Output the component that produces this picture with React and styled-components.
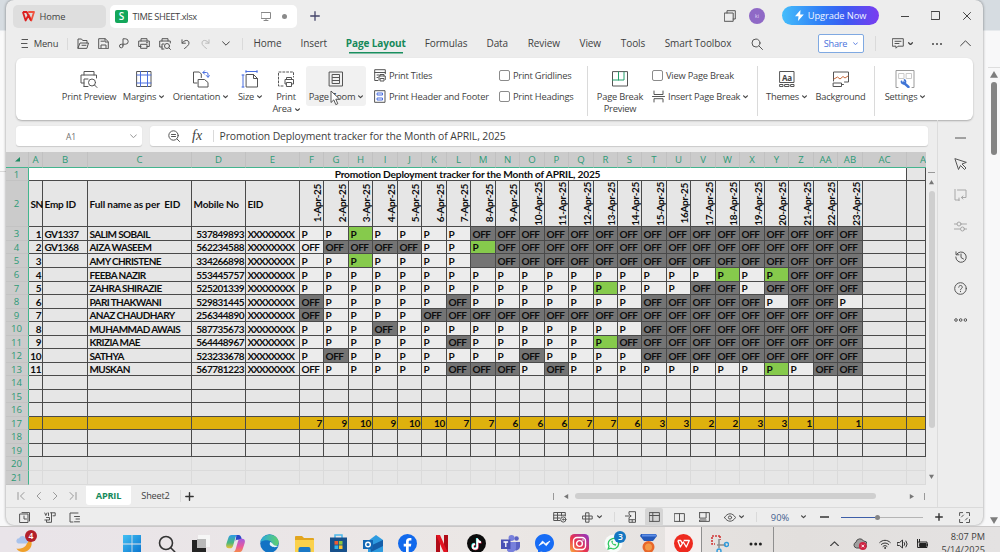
import React from 'react';
import styled, { createGlobalStyle, css } from 'styled-components';

const GlobalStyle = createGlobalStyle`
  * {
    box-sizing: border-box;
  }
  body {
    margin: 0;
    overflow: hidden;
    font-family: 'Open Sans', 'Noto Sans', sans-serif;
    color: #3f3f3f;
  }
  svg {
    display: block;
    flex: none;
  }
`;

const Screen = styled.div`
  width: 1000px;
  height: 552px;
  display: flex;
  flex-direction: column;
  overflow: hidden;
  background: #f6f6f7;
`;

const Desktop = styled.div`
  height: 526px;
  display: flex;
  flex: none;
  background: linear-gradient(#d6dce1 30px, #f8f8f9 31px);
`;

const LeftEdge = styled.div`
  width: 6px;
  padding-top: 31px;
`;

const LeftPage = styled.div`
  height: 141px;
  border-bottom: 1px solid #d9d9d9;
  border-radius: 6px 0 0 0;
  background: #fafafa;
`;

const RightEdge = styled.div`
  width: 17px;
  padding: 31px 0 0 5px;
  display: flex;
  flex-direction: column;
  align-items: center;
`;

const RightPage = styled.div`
  height: 37px;
  width: 12px;
  margin-bottom: 3px;
  border-bottom: 1px solid #dedede;
`;

const OuterThumb = styled.div`
  width: 6px;
  height: 73px;
  margin: 3px 0 361px;
  border-radius: 3px;
  background: #848484;
`;

const Window = styled.div`
  width: 977px;
  height: 525px;
  flex: none;
  display: flex;
  flex-direction: column;
  background: #ededed;
  border-radius: 8px;
  box-shadow: 0 0 3px rgba(0, 0, 0, 0.45);
`;

const TitleBar = styled.div`
  height: 31px;
  flex: none;
  display: flex;
  align-items: flex-start;
  padding: 5px 0 0 7px;
`;

const DocTab = styled.div`
  width: ${p => p.$w}px;
  height: 23px;
  margin-right: 4px;
  padding-left: ${p => (p.$active ? 5 : 9)}px;
  display: flex;
  align-items: center;
  gap: 4.5px;
  border-radius: 5px;
  font-size: 9.3px;
  letter-spacing: ${p => (p.$active ? -0.38 : -0.1)}px;
  white-space: nowrap;
  background: ${p => (p.$active ? '#fff' : '#dedede')};
`;

const SheetBadge = styled.div`
  width: 13px;
  height: 13px;
  border-radius: 2px;
  background: #13a75b;
  color: #fff;
  font-size: 10px;
  line-height: 13px;
  font-weight: 600;
  letter-spacing: 0;
  text-align: center;
`;

const UnsavedDot = styled.div`
  width: 5px;
  height: 5px;
  margin-left: 6px;
  border-radius: 50%;
  background: #8a8a8a;
`;

const Spacer = styled.div`
  flex: ${p => (p.$w ? 'none' : 1)};
  width: ${p => p.$w || 0}px;
`;

const Controls = styled.div`
  height: 21px;
  display: flex;
  align-items: center;
`;

const Avatar = styled.div`
  width: 16px;
  height: 16px;
  margin: 0 17px 0 13px;
  border-radius: 50%;
  background: #8f69c6;
  color: #e5daf5;
  font-size: 5px;
  line-height: 16px;
  text-align: center;
`;

const UpgradeButton = styled.div`
  width: 97px;
  height: 19px;
  display: flex;
  align-items: center;
  justify-content: center;
  gap: 4px;
  border-radius: 10px;
  background: linear-gradient(90deg, #45bdfb, #2f7bf6 42%, #3b5bf2 65%, #7a3cf0);
  color: #f2f6ff;
  font-size: 9.3px;
  letter-spacing: -0.1px;
`;

const MenuBar = styled.div`
  height: 27px;
  flex: none;
  display: flex;
  align-items: center;
  padding: 0 12px 2px 15px;
`;

const Cell = styled.div`
  width: ${p => p.$w}px;
  flex: none;
  display: flex;
  align-items: center;
  justify-content: center;
  white-space: nowrap;
`;

const MenuLabel = styled(Cell)`
  font-size: 9.4px;
  letter-spacing: -0.15px;
`;

const Divider = styled.div`
  width: 1px;
  height: ${p => p.$h}px;
  flex: none;
  background: #dadada;
`;

const MenuTab = styled(Cell)`
  height: 20px;
  margin-right: 20px;
  padding-bottom: 1px;
  font-size: 10px;
  letter-spacing: -0.1px;
  ${p =>
    p.$active &&
    css`
      color: #16895a;
      font-weight: 700;
      background: linear-gradient(#1a8f5f, #1a8f5f) no-repeat center bottom / 54px 1.5px;
    `}
`;

const ShareButton = styled.div`
  width: 46px;
  height: 19px;
  display: flex;
  align-items: center;
  justify-content: center;
  gap: 6px;
  border: 1px solid #7fa9e2;
  border-radius: 2px;
  background: #fff;
  color: #4a72dc;
  font-size: 9.2px;
  letter-spacing: -0.2px;
`;

const Ribbon = styled.div`
  height: 62px;
  flex: none;
  margin: 0 10px;
  padding: 8px 0 0 44px;
  display: flex;
  align-items: flex-start;
  border-radius: 6px;
  background: #fff;
  box-shadow: 0 1px 2px rgba(0, 0, 0, 0.28);
  font-size: 9.3px;
  letter-spacing: -0.22px;
`;

const RibbonButton = styled.div`
  position: relative;
  width: ${p => p.$w}px;
  height: ${p => (p.$tall ? 50 : 40)}px;
  flex: none;
  margin-left: ${p => p.$ml || 0}px;
  padding-top: 4px;
  display: flex;
  flex-direction: column;
  align-items: center;
  border-radius: 3px;
  background: ${p => (p.$hover ? '#f1f1f1' : 'none')};
`;

const RibbonLabel = styled.div`
  display: flex;
  align-items: center;
  gap: 3px;
  margin-top: ${p => (p.$first ? 3 : 0)}px;
  line-height: 12.4px;
  white-space: nowrap;
`;

const Pointer = styled.svg`
  position: absolute;
  left: 24px;
  top: 24px;
`;

const RibbonColumn = styled.div`
  width: ${p => p.$w}px;
  flex: none;
  margin: -1.5px 0 0 ${p => p.$ml || 0}px;
  display: flex;
  flex-direction: column;
`;

const RibbonRow = styled.div`
  height: 21.5px;
  display: flex;
  align-items: center;
  gap: 3px;
  white-space: nowrap;
`;

const Checkbox = styled.span`
  width: 11px;
  height: 11px;
  flex: none;
  border: 1px solid #8b8b8b;
  border-radius: 2px;
`;

const Body = styled.div`
  height: 387px;
  flex: none;
  display: flex;
`;

const Main = styled.div`
  width: 932px;
  display: flex;
  flex-direction: column;
  border-right: 1px solid #dcdcdc;
`;

const FormulaBar = styled.div`
  height: 32px;
  flex: none;
  display: flex;
  gap: 8px;
  padding: 6px 9px 6px 10px;
`;

const NameBox = styled.div`
  width: 126px;
  padding: 0 5px 0 50px;
  display: flex;
  align-items: center;
  justify-content: space-between;
  border-radius: 3px;
  background: #fff;
  box-shadow: 0 0.5px 1px rgba(0, 0, 0, 0.15);
  color: #707070;
  font-size: 8.5px;
`;

const FormulaInput = styled(NameBox)`
  flex: 1;
  padding: 0 0 0 18px;
  justify-content: flex-start;
  color: #3d3d3d;
  font-size: 10.4px;
  letter-spacing: -0.11px;
`;

const Fx = styled.div`
  width: 21px;
  margin-left: 12px;
  font: italic 14px 'Liberation Serif', serif;
  letter-spacing: 0;
`;

const FormulaText = styled.div`
  margin-left: 5.5px;
  white-space: nowrap;
`;

const SheetArea = styled.div`
  height: 333px;
  flex: none;
  display: flex;
`;

const columnTemplate =
  '23px 14px 45px 104px 54px 54px 24px 25px 24px 25px 24px 25px 24px 25px 24px 25px 24px 25px 24px 24px 25px 24px 25px 24px 25px 24px 25px 24px 25px 44px 19px';

const Grid = styled.div`
  width: 920px;
  display: flex;
  flex-direction: column;
  overflow: hidden;
  background: #e6e6e6;
  font-family: Lato, Carlito, sans-serif;
  font-weight: 700;
  font-size: 10px;
  color: #0d0d0d;
`;

const GridRow = styled.div`
  display: grid;
  flex: none;
  grid-template-columns: ${columnTemplate};
  height: ${p => p.$h}px;
  background: ${p => (p.$gold ? '#deb10d' : 'none')};
`;

const HeadCell = styled.div`
  display: flex;
  align-items: center;
  justify-content: center;
  overflow: hidden;
  background: #cbcbcb;
  border-right: 1px solid #c1c1c1;
  border-bottom: 1px solid #43b58e;
  color: #2d9a76;
  font: 9.6px 'Open Sans', sans-serif;
`;

const CutHeadCell = styled(HeadCell)`
  justify-content: flex-end;
  border-right: none;
`;

const RowHead = styled(HeadCell)`
  padding-right: 1px;
  border-right: 1px solid #43b58e;
  border-bottom: 1px solid #c3c3c3;
`;

const fills = {
  plain: 'transparent',
  light: '#ececec',
  off: '#747474',
  green: '#86ca4c',
};

const DataCell = styled.div`
  min-width: 0;
  display: flex;
  align-items: center;
  justify-content: ${p => (p.$right ? 'flex-end' : 'flex-start')};
  padding: 0 1px 0 1.5px;
  white-space: pre;
  letter-spacing: ${p => p.$ls ?? -0.45}px;
  border-right: 1px solid ${p => (p.$faint ? '#dadada' : '#4a4a4a')};
  border-bottom: 1px solid ${p => (p.$faint ? '#dadada' : '#4a4a4a')};
  background: ${p => fills[p.$fill || 'plain']};
`;

const TitleCell = styled.div`
  grid-column: 2 / 31;
  display: flex;
  align-items: center;
  justify-content: center;
  border-right: 1px solid #4a4a4a;
  border-bottom: 1px solid #4a4a4a;
  background: #fff;
  font-size: 10.2px;
  letter-spacing: -0.2px;
`;

const DateCell = styled(DataCell)`
  justify-content: flex-end;
  padding: 0;

  span {
    writing-mode: vertical-rl;
    transform: rotate(180deg);
    line-height: 12px;
  }
`;

const VScroll = styled.div`
  flex: 1;
  padding-top: 20px;
  display: flex;
  flex-direction: column;
  align-items: center;
`;

const SplitHandle = styled.div`
  width: 7px;
  height: 1px;
  margin-bottom: 7px;
  background: #999;
`;

const VThumb = styled.div`
  width: 6px;
  height: 237px;
  margin: 6px 0 46px;
  border-radius: 3px;
  background: #cfcfcf;
`;

const SheetTabs = styled.div`
  flex: 1;
  padding-left: 11px;
  display: flex;
  align-items: center;
  font-size: 9.2px;
`;

const SheetTab = styled(Cell)`
  height: 19px;
  margin: -2px 0 0 ${p => (p.$active ? 9 : 0)}px;
  border-radius: 0 0 3px 3px;
  letter-spacing: -0.2px;
  ${p =>
    p.$active &&
    css`
      background: #fff;
      color: #168a5b;
      font-weight: 700;
    `}
`;

const HThumb = styled.div`
  width: 301px;
  height: 6px;
  margin: 0 33px 0 6px;
  border-radius: 3px;
  background: #cfcfcf;
`;

const SidePanel = styled.div`
  flex: 1;
  padding-top: 2px;
  display: flex;
  flex-direction: column;
  align-items: center;
`;

const SideItem = styled.div`
  height: ${p => p.$h || 31.2}px;
  display: flex;
  align-items: center;
  opacity: ${p => (p.$dim ? 0.45 : 1)};
`;

const StatusBar = styled.div`
  flex: 1;
  display: flex;
  align-items: center;
  padding: 0 9px 0 9px;
  border-top: 1px solid #dadada;
`;

const StatusItem = styled(Cell)`
  height: 18px;
  border-radius: 2px;
  background: ${p => (p.$on ? '#d5d5d5' : 'none')};
  color: #44618d;
  font-size: 9.3px;
`;

const Slider = styled.div`
  width: 82px;
  height: 5px;
  display: flex;
  align-items: center;

  &::before {
    content: '';
    width: 34px;
    height: 1px;
    background: #3d5ea8;
  }
  &::after {
    content: '';
    flex: 1;
    height: 1px;
    background: #b5b5b5;
  }
`;

const Knob = styled.div`
  width: 5px;
  height: 5px;
  border-radius: 50%;
  background: #858585;
`;

const Taskbar = styled.div`
  height: 34px;
  flex: none;
  display: flex;
  align-items: center;
  border-top: 1px solid #c9c7c7;
  background: linear-gradient(90deg, #e9e4e9, #ebe7e5 50%, #e2dfdd 80%, #e4e2e2);
`;

const TaskSlot = styled.div`
  position: relative;
  width: ${p => p.$w || 34.4}px;
  height: 34px;
  flex: none;
  display: flex;
  align-items: center;
  justify-content: center;
  background: ${p => (p.$on ? '#f4efee' : 'none')};
  border-right: ${p => (p.$line ? '1px solid #8f8f8f' : 'none')};
`;

const Badge = styled.div`
  position: absolute;
  left: ${p => p.$x}px;
  top: ${p => p.$y}px;
  width: 12px;
  height: 12px;
  border-radius: 50%;
  background: ${p => p.$color};
  color: #fff;
  font-size: 8.5px;
  font-weight: 600;
  line-height: 12px;
  text-align: center;
`;

const Clock = styled.div`
  width: 60px;
  margin-left: auto;
  margin-right: 15px;
  font-size: 9.2px;
  line-height: 12.5px;
  text-align: right;
  white-space: nowrap;
`;

const Line = ({ w = 12, h = w, color = '#555', sw = 1, children }) => (
  <svg
    width={w}
    height={h}
    viewBox={`0 0 ${w} ${h}`}
    fill="none"
    stroke={color}
    strokeWidth={sw}
    strokeLinejoin="round"
    strokeLinecap="round"
  >
    {children}
  </svg>
);

const Chevron = ({ w = 5, sw = 1.1, color = '#444', up }) => {
  const r = w / 2 - 0.6;
  return (
    <Line w={w} h={w / 2 + 1} sw={sw} color={color}>
      <path d={up ? `M.6 ${r + 0.8}l${r}-${r} ${r} ${r}` : `M.6.8l${r} ${r} ${r}-${r}`} />
    </Line>
  );
};

const trianglePaths = {
  up: 'M0 5 3 0l3 5z',
  down: 'M0 1h6L3 6z',
  left: 'M5 0v6L0 3z',
  right: 'M1 0v6l5-3z',
};

const Triangle = ({ w = 6, dir = 'up', color = '#777' }) => (
  <svg width={w} height={w} viewBox="0 0 6 6">
    <path d={trianglePaths[dir]} fill={color} />
  </svg>
);

const Dots = ({ r = 1, color = '#444', gap = 4, hollow }) => (
  <svg width={gap * 2 + 4} height="4">
    {[0, 1, 2].map(i => (
      <circle
        key={i}
        cx={2 + i * gap}
        cy="2"
        r={r}
        fill={hollow ? 'none' : color}
        stroke={hollow ? color : 'none'}
        strokeWidth=".9"
      />
    ))}
  </svg>
);

const WpsLogo = () => (
  <svg width="13" height="11" viewBox="0 0 13 11" fill="none" strokeWidth="1.8" strokeLinejoin="round">
    <path d="M6.200 1h5.800L9.300 9.500 6.500 3.500" stroke="#f0533f" />
    <path d="M.9 1l2.700 8.500L6.300 4.500 9 9.500M.9 1h3.800l2 4" stroke="#dc1f1f" />
  </svg>
);

const names = [
  ['1', 'GV1337', 'SALIM SOBAIL', '537849893'],
  ['2', 'GV1368', 'AIZA WASEEM', '562234588'],
  ['3', '', 'AMY CHRISTENE', '334266898'],
  ['4', '', 'FEEBA NAZIR', '553445757'],
  ['5', '', 'ZAHRA SHIRAZIE', '525201339'],
  ['6', '', 'PARI THAKWANI', '529831445'],
  ['7', '', 'ANAZ CHAUDHARY', '256344890'],
  ['8', '', 'MUHAMMAD AWAIS', '587735673'],
  ['9', '', 'KRIZIA MAE', '564448967'],
  ['10', '', 'SATHYA', '523233678'],
  ['11', '', 'MUSKAN', '567781223'],
];

// P present, O off, G highlighted present, F off without fill, X filled blank
const attendance = [
  'PPGPPPPOOOOOOOOOOOOOOOO',
  'FOOOOPPGOOOOOOOOOOOOOOO',
  'PPGPPPPXOOOOOOOOOOOOOOO',
  'PPPPPPPPPPPPPPPPPGPGOOO',
  'PPPPPPPPPPPPGPPPOOPOOOO',
  'OPPPPPOPPPPPPPOOOOOPOOP',
  'OPPPPOOOOOOOOOOOOOOOOOO',
  'PPPOPPPPPPPPPPOOOOOOOOO',
  'PPPPPPOPPPPPGOOOOOOOOOO',
  'POPPPPPPPOPPPPOOOOOOOOO',
  'FPPPPPOOOPOPPPPPPPPGPOO',
];

const marks = {
  P: ['P', 'light'],
  O: ['OFF', 'off'],
  G: ['P', 'green'],
  F: ['OFF', 'light'],
  X: ['', 'off'],
};

const totals = [7, 9, 10, 9, 10, 10, 7, 7, 6, 6, 6, 7, 7, 6, 3, 3, 2, 2, 3, 3, 1, '', 1];
const letters = 'A B C D E F G H I J K L M N O P Q R S T U V W X Y Z AA AB AC'.split(' ');
const dates = totals.map((_, i) => (i === 15 ? '16Apr-25' : `${i + 1}-Apr-25`));
const rowHeights = [14, 13, 14, 14, 13, 14, 13, 14, 13, 14, 13];
const emptyCells = Array.from({ length: 30 });

function BlankRow({ n, h, faint }) {
  return (
    <GridRow $h={h}>
      <RowHead>{n}</RowHead>
      {emptyCells.map((_, i) => (
        <DataCell key={i} $faint={faint} />
      ))}
    </GridRow>
  );
}

function Sheet() {
  return (
    <Grid>
      <GridRow $h={16}>
        <HeadCell>
          <svg width="5" height="5">
            <path d="M5 0v4.5H0z" fill="#1e8a62" />
          </svg>
        </HeadCell>
        {letters.map(l => (
          <HeadCell key={l}>{l}</HeadCell>
        ))}
        <CutHeadCell>A</CutHeadCell>
      </GridRow>
      <GridRow $h={13}>
        <RowHead>1</RowHead>
        <TitleCell>Promotion Deployment tracker for the Month of APRIL, 2025</TitleCell>
        <DataCell />
      </GridRow>
      <GridRow $h={46}>
        <RowHead>2</RowHead>
        <DataCell>SN</DataCell>
        <DataCell $ls={-0.2}>Emp ID</DataCell>
        <DataCell $ls={-0.1}>Full name as per  EID</DataCell>
        <DataCell $ls={-0.15}>Mobile No</DataCell>
        <DataCell $ls={-0.2}>EID</DataCell>
        {dates.map(d => (
          <DateCell key={d} $ls={-0.35}>
            <span>{d}</span>
          </DateCell>
        ))}
        <DataCell />
        <DataCell />
      </GridRow>
      {names.map(([sn, emp, name, phone], r) => (
        <GridRow key={sn} $h={rowHeights[r]}>
          <RowHead>{r + 3}</RowHead>
          <DataCell $right>{sn}</DataCell>
          <DataCell $ls={-0.55}>{emp}</DataCell>
          <DataCell $ls={-0.6}>{name}</DataCell>
          <DataCell $ls={-0.5} $right>
            {phone}
          </DataCell>
          <DataCell $ls={-0.9}>XXXXXXXX</DataCell>
          {attendance[r].split('').map((m, i) => (
            <DataCell key={i} $fill={marks[m][1]}>
              {marks[m][0]}
            </DataCell>
          ))}
          <DataCell />
          <DataCell />
        </GridRow>
      ))}
      <BlankRow n={14} h={14} />
      <BlankRow n={15} h={13} />
      <BlankRow n={16} h={14} />
      <GridRow $h={13} $gold>
        <RowHead>17</RowHead>
        {emptyCells.slice(0, 5).map((_, i) => (
          <DataCell key={i} />
        ))}
        {totals.map((t, i) => (
          <DataCell key={i} $ls={-0.3} $right>
            {t}
          </DataCell>
        ))}
        <DataCell />
        <DataCell />
      </GridRow>
      <BlankRow n={18} h={14} />
      <BlankRow n={19} h={13} />
      <BlankRow n={20} h={14} faint />
      <BlankRow n={21} h={14} faint />
    </Grid>
  );
}

function TopBar() {
  return (
    <TitleBar>
      <DocTab $w={93}>
        <WpsLogo />
        Home
      </DocTab>
      <DocTab $w={187} $active>
        <SheetBadge>S</SheetBadge>
        TIME SHEET.xlsx
        <Spacer />
        <Line w={10} h={9} color="#888">
          <path d="M.5.5h9v6h-9zM5 6.500v2M3 8.500h4" />
        </Line>
        <UnsavedDot />
        <Spacer $w={6} />
      </DocTab>
      <Controls>
        <Spacer $w={9} />
        <Line w={10} color="#44446a" sw={1.3}>
          <path d="M5 .7v8.600M.7 5h8.600" />
        </Line>
      </Controls>
      <Spacer />
      <Controls>
        <Line w={12}>
          <path d="M.7 3h8.500v8.300H.7zM3 3V.7h8.300V9H9.200" />
        </Line>
        <Avatar>ki</Avatar>
        <UpgradeButton>
          <svg width="9" height="11" viewBox="0 0 9 11">
            <path d="M5.500 0 0 6.300h3.500L3 11l5.800-6.500H5.200z" fill="#fff" />
          </svg>
          Upgrade Now
        </UpgradeButton>
        <Spacer $w={22} />
        <Line w={8} color="#444">
          <path d="M0 4.500h8" />
        </Line>
        <Spacer $w={22} />
        <Line w={9} color="#444">
          <path d="M.5.5h8v8h-8z" />
        </Line>
        <Spacer $w={23} />
        <Line w={8} color="#444">
          <path d="M.5.5l7 7M7.500.5l-7 7" />
        </Line>
        <Spacer $w={12} />
      </Controls>
    </TitleBar>
  );
}

function Menu() {
  return (
    <MenuBar>
      <Line w={7} h={9}>
        <path d="M1 .5h6M0 4.500h6M1 8.500h6" />
      </Line>
      <Spacer $w={6} />
      <MenuLabel $w={24}>Menu</MenuLabel>
      <Spacer $w={9} />
      <Divider $h={12} />
      <Spacer $w={8} />
      <Cell $w={14}>
        <Line w={12} h={11}>
          <path d="M1 10V1h3.500l1.200 1.500H10V5M1 10l2-5h8.500L10 10zM5 7.300h4" />
        </Line>
      </Cell>
      <Spacer $w={6.5} />
      <Cell $w={14}>
        <Line w={11}>
          <path d="M.7 10.300V.7h6.500l3.100 3v6.600zM3 10V7h5v3M3 3.200h3M7 1v3h3" />
        </Line>
      </Cell>
      <Spacer $w={6.5} />
      <Cell $w={14}>
        <Line w={10} h={11}>
          <path d="M4 7.500V.8h2.500a2.700 2.700 0 0 1 0 5.400H3.200M4 7.500a1.800 1.800 0 1 1-1.600-1.300" />
        </Line>
      </Cell>
      <Spacer $w={6} />
      <Cell $w={14}>
        <Line w={12} h={11}>
          <path d="M3 3V.7h6V3M3 8.500H.7V3h10.600v5.500H9M3 6.300h6v4H3zM8.500 4.700h1" />
        </Line>
      </Cell>
      <Spacer $w={7} />
      <Cell $w={14}>
        <Line w={12} h={12}>
          <path d="M3 3V.7h6V3M3 9H.7V3h10.600v2M3 11V6h2M3 11h2" />
          <circle cx="8" cy="8" r="2.500" />
          <path d="M9.800 9.800l1.700 1.700" />
        </Line>
      </Cell>
      <Spacer $w={6} />
      <Cell $w={14}>
        <Line w={9} h={10}>
          <path d="M1 .8v3.400h3.400M1.200 4C3 .8 8 .3 8 4c0 2.200-2 3.500-4.500 5.500" />
        </Line>
      </Cell>
      <Spacer $w={6} />
      <Cell $w={14}>
        <Line w={9} h={10} color="#bbb">
          <path d="M8 .8v3.400H4.600M7.800 4C6 .8 1 .3 1 4c0 2.200 2 3.500 4.500 5.500" />
        </Line>
      </Cell>
      <Spacer $w={7} />
      <Cell $w={14}>
        <Chevron w={8} sw={1} />
      </Cell>
      <Spacer $w={9} />
      <Divider $h={12} />
      <Spacer $w={10.5} />
      <MenuTab $w={28}>Home</MenuTab>
      <MenuTab $w={24.5}>Insert</MenuTab>
      <MenuTab $w={59.5} $active>
        Page Layout
      </MenuTab>
      <MenuTab $w={41}>Formulas</MenuTab>
      <MenuTab $w={21.5}>Data</MenuTab>
      <MenuTab $w={31.5}>Review</MenuTab>
      <MenuTab $w={21.5}>View</MenuTab>
      <MenuTab $w={24}>Tools</MenuTab>
      <MenuTab $w={66}>Smart Toolbox</MenuTab>
      <Line w={12}>
        <circle cx="5" cy="5" r="4" />
        <path d="M8 8l3.500 3.500" />
      </Line>
      <Spacer />
      <ShareButton>
        Share
        <Chevron color="#4a72dc" w={5} sw={0.9} />
      </ShareButton>
      <Spacer $w={11} />
      <Divider $h={15} />
      <Spacer $w={16} />
      <Line w={12} h={11}>
        <path d="M.7.7h10.600v7.500H6L4 10.200v-2H.7zM3 3.300h6M3 5.500h4" />
      </Line>
      <Spacer $w={4} />
      <Chevron w={5} sw={1.3} />
      <Spacer $w={18} />
      <Dots />
      <Spacer $w={17} />
      <Chevron w={11} sw={1} up />
    </MenuBar>
  );
}

function Tool({ w, ml, label, second, arrow, hover, icon, children }) {
  return (
    <RibbonButton $w={w} $ml={ml} $tall={!!second} $hover={hover}>
      {icon}
      <RibbonLabel $first>
        {label}
        {arrow && !second && <Chevron w={5} sw={1.2} />}
      </RibbonLabel>
      {second && (
        <RibbonLabel>
          {second}
          {arrow && <Chevron w={5} sw={1.2} />}
        </RibbonLabel>
      )}
      {children}
    </RibbonButton>
  );
}

function RibbonBar() {
  return (
    <Ribbon>
      <Tool
        w={58}
        label="Print Preview"
        icon={
          <Line w={18}>
            <path d="M4 5V1.500h10V5M4 13H1V5h15.500v3M4 16.500V9h4M4 16.500h4" />
            <circle cx="12" cy="12.500" r="3.500" />
            <path d="M14.500 15l2.500 2.500" />
          </Line>
        }
      />
      <Tool
        w={51}
        label="Margins"
        arrow
        icon={
          <Line w={18}>
            <path d="M2 1.500h14v15H2z" />
            <path d="M5.500 1.500v15M12.500 1.500v15M2 5h14M2 13h14" stroke="#4a6fe0" />
          </Line>
        }
      />
      <Tool
        w={63}
        label="Orientation"
        arrow
        icon={
          <Line w={18}>
            <path d="M5 13H1.500V2h5.800l2 2v3.500" />
            <path d="M6.500 9.500h6l3.500 3v4.500H6.500z" />
            <path d="M11 2.500h3.500a1.500 1.500 0 0 1 1.500 1.500v3M12.500.8 11 2.500l1.500 1.700M14.300 5.500 16 7.300l1.500-1.700" stroke="#4a6fe0" />
          </Line>
        }
      />
      <Tool
        w={36}
        label="Size"
        arrow
        icon={
          <Line w={18}>
            <path d="M5.500 4.500h7l4 4v8.500h-11zM12.500 4.500v4h4" />
            <path d="M1 5h2M2 5v12M1 17h2M5 1.500h11M5 .5v2M16 .5v2" stroke="#4a6fe0" />
          </Line>
        }
      />
      <Tool
        w={36}
        label="Print"
        second="Area"
        arrow
        icon={
          <Line w={18}>
            <path d="M6 16H1.500V2h15v5" strokeDasharray="2 1.800" />
            <path d="M9.500 9.500v-2h5v2M9 14H8V9.500h8.500V14H15M9.800 12.500h4.700v4H9.800z" />
          </Line>
        }
      />
      <Tool
        w={60}
        ml={2}
        label="Page Zoom"
        arrow
        hover
        icon={
          <Line w={18}>
            <path d="M2.500 2h13v14h-13zM5.500 4.500h7v9h-7zM5.500 7.500h7M5.500 10.500h7" />
          </Line>
        }
      >
        <Pointer width="12" height="16" viewBox="0 0 12 16">
          <path d="M1 1v11.500l2.800-2.600 2 4.700 2-.9-2-4.500h3.900z" fill="#fff" stroke="#444" strokeWidth=".9" />
        </Pointer>
      </Tool>
      <RibbonColumn $w={125} $ml={8}>
        <RibbonRow>
          <Line w={12} h={13}>
            <path d="M4 11.500H.7V.7h10.600v4M.7 3.500h10.600M3 6h2M3 8.500h1M6 7V5.500h4V7M5 10.500V7h6.300v3.500M6.500 9.500h3.500V12H6.500z" />
          </Line>
          Print Titles
        </RibbonRow>
        <RibbonRow>
          <Line w={12} h={13}>
            <path d="M1 .7h10v11.600H1z" />
            <path d="M3.500 3h5v2h-5zM3.500 8h5v2h-5z" stroke="#4a6fe0" />
          </Line>
          Print Header and Footer
        </RibbonRow>
      </RibbonColumn>
      <RibbonColumn $w={88}>
        <RibbonRow>
          <Checkbox />
          Print Gridlines
        </RibbonRow>
        <RibbonRow>
          <Checkbox />
          Print Headings
        </RibbonRow>
      </RibbonColumn>
      <Divider $h={50} />
      <Tool
        w={64}
        label="Page Break"
        second="Preview"
        icon={
          <Line w={18}>
            <path d="M1.500 2v14h15V2z" />
            <path d="M1.500 10h11.500V2M7.500 2v8" stroke="#25a06c" />
          </Line>
        }
      />
      <RibbonColumn $w={105}>
        <RibbonRow>
          <Checkbox />
          View Page Break
        </RibbonRow>
        <RibbonRow>
          <Line w={13} h={13}>
            <path d="M2 1v3.500h9V1M.5 6.500h12M2 12V8.700h9V12" />
          </Line>
          Insert Page Break
          <Chevron w={5} sw={1.2} />
        </RibbonRow>
      </RibbonColumn>
      <Divider $h={50} />
      <Tool
        w={57}
        label="Themes"
        arrow
        icon={
          <Line w={18}>
            <path d="M2 1.500h14v11H2zM2 14.500h3v2H2zM7 14.500h4v2H7zM13 14.500h3v2h-3z" />
            <text x="9" y="10.500" fontSize="8" fontWeight="700" textAnchor="middle" fill="#444" stroke="none">
              Aa
            </text>
          </Line>
        }
      />
      <Tool
        w={51}
        label="Background"
        icon={
          <Line w={18}>
            <path d="M1.500 11V2h15v10h-4M1.500 13h8v3.500h-8zM9.500 14.500h2" />
            <path d="M2 9l3.500-2 2.500 2 3-2.500 2 1.500 3-2" stroke="#c96a3c" />
          </Line>
        }
      />
      <Spacer $w={8} />
      <Divider $h={50} />
      <Tool
        w={60}
        label="Settings"
        arrow
        icon={
          <Line w={20} h={18} color="#9a9a9a">
            <path d="M3 17.500H1V.5h18v17h-2" />
            <path d="M4 3.500h5v5H4zM11.500 3.500h5v5h-5z" stroke="#c9c9c9" />
            <path d="M8.500 12.500l5 4.500" stroke="#3f74d6" strokeWidth="2.400" />
            <path d="M6.500 11.500a2 2 0 0 0 3.500 1.500 2 2 0 0 0-.5-3" stroke="#3f74d6" strokeWidth="1.800" />
          </Line>
        }
      />
    </Ribbon>
  );
}

function SheetFooter() {
  return (
    <SheetTabs>
      <Cell $w={8}>
        <Line w={8} h={8} color="#999">
          <path d="M1 .5v7M7 .5 3.500 4 7 7.500" />
        </Line>
      </Cell>
      <Spacer $w={9} />
      <Cell $w={8}>
        <Line w={5} h={8} color="#999">
          <path d="M4.500.5 1 4l3.500 3.500" />
        </Line>
      </Cell>
      <Spacer $w={9} />
      <Cell $w={8}>
        <Line w={5} h={8} color="#999">
          <path d="M.5.5 4 4 .5 7.500" />
        </Line>
      </Cell>
      <Spacer $w={9} />
      <Cell $w={9}>
        <Line w={8} h={8} color="#999">
          <path d="M7 .5v7M1 .5 4.500 4 1 7.500" />
        </Line>
      </Cell>
      <SheetTab $w={45} $active>
        APRIL
      </SheetTab>
      <SheetTab $w={49}>Sheet2</SheetTab>
      <Divider $h={12} />
      <Spacer $w={4} />
      <Line w={9} color="#333" sw={1.4}>
        <path d="M4.500.8v7.400M.8 4.500h7.400" />
      </Line>
      <Spacer />
      <Line w={1} h={7} color="#999">
        <path d="M.5 0v7" />
      </Line>
      <Spacer $w={10} />
      <Triangle w={5} dir="left" />
      <HThumb />
      <Triangle w={5} dir="right" />
      <Spacer $w={10} />
      <Line w={1} h={7} color="#999">
        <path d="M.5 0v7" />
      </Line>
      <Spacer $w={12} />
    </SheetTabs>
  );
}

function Tools() {
  return (
    <SidePanel>
      <SideItem>
        <Line w={11} h={2}>
          <path d="M0 1h11" />
        </Line>
      </SideItem>
      <SideItem $h={22}>
        <Line w={13} h={13}>
          <path d="M1 1l3.500 10.500 2-4 4 4 1.500-1.500-4-4 4-1.500z" />
        </Line>
      </SideItem>
      <SideItem $dim $h={40}>
        <Line w={13} h={12}>
          <path d="M1 0v11h4M3.500 1h8.500v7.500H7.500M9 7l-1.700 1.500L9 10M5 9v3" />
        </Line>
      </SideItem>
      <SideItem $dim $h={22}>
        <Line w={13} h={11}>
          <path d="M0 3h3M7 3h5.500M0 8h6M10 8h3" />
          <circle cx="5" cy="3" r="2" />
          <circle cx="8.500" cy="8" r="2" />
        </Line>
      </SideItem>
      <SideItem $h={40}>
        <Line w={12}>
          <path d="M1.500 3.500A5.200 5.200 0 1 1 .8 6M1 .8v3h3M6 3v3.500l2.500 1.500" />
        </Line>
      </SideItem>
      <SideItem $h={23}>
        <Line w={13}>
          <circle cx="6.500" cy="6.500" r="5.800" />
          <path d="M4.700 5.200c0-2.400 3.600-2.300 3.600 0 0 1.300-1.800 1.300-1.800 2.600M6.500 9.400v.3" />
        </Line>
      </SideItem>
      <SideItem $h={40}>
        <Dots gap={4.700} r={1.300} hollow />
      </SideItem>
    </SidePanel>
  );
}

function Status() {
  return (
    <StatusBar>
      <StatusItem $w={19}>
        <Line w={11}>
          <path d="M1 2h8v8.500H1zM3 .6h7.500V9M5 4v3h2.500" />
        </Line>
      </StatusItem>
      <Spacer $w={6} />
      <StatusItem $w={19}>
        <Line w={12} h={11}>
          <path d="M.8 1l1 2.500L3 1M4.500 1v2.500M6.500.8h4.700v3H9M2.500 5.500h3V8h-3v2.300h5V1M.8 8h1.700" />
        </Line>
      </StatusItem>
      <Spacer $w={6} />
      <StatusItem $w={19}>
        <Line w={11}>
          <path d="M9 1H1v9h3M5.500 4.500h5M7 7h3.500M5.500 9.800h5" />
        </Line>
      </StatusItem>
      <Spacer />
      <StatusItem $w={20}>
        <Line w={14} h={12}>
          <path d="M7 9.500H.7v-8h11.600V5M.7 4.200h11.600M.7 7H7M4.500 1.500v8M8.500 1.500V5" />
          <circle cx="10.300" cy="8.500" r="2.600" />
          <circle cx="10.300" cy="8.500" r=".7" />
        </Line>
      </StatusItem>
      <Spacer $w={8} />
      <StatusItem $w={19}>
        <Line w={11}>
          <path d="M4 .8h3v9.400H4zM.8 4h9.400v3H.8z" />
        </Line>
      </StatusItem>
      <Chevron w={5} sw={1.2} />
      <Spacer $w={12} />
      <Divider $h={10} />
      <Spacer $w={7} />
      <StatusItem $w={19}>
        <Line w={12}>
          <path d="M4 3V.7h6.500v8H4V7M0 5h6M4.500 3.500 6 5 4.500 6.500M4 9v2.300h6.500V9M7.200 9v2" />
        </Line>
      </StatusItem>
      <Spacer $w={4.5} />
      <StatusItem $w={18} $on>
        <Line w={11} h={10}>
          <path d="M.6.6h9.800v8.800H.6zM.6 3.500h9.800M3.800.6v8.800" />
        </Line>
      </StatusItem>
      <Spacer $w={7} />
      <StatusItem $w={18}>
        <Line w={11} h={9}>
          <path d="M.6.6h9.800v7.800H.6zM5.500.6v7.800" />
        </Line>
      </StatusItem>
      <Spacer $w={7} />
      <StatusItem $w={18}>
        <Line w={11} h={10}>
          <path d="M.6.6h9.800v8.800H.6M.6.6v5.500h6.500V.6M.6 9.400V8h6.500" />
        </Line>
      </StatusItem>
      <Spacer $w={8} />
      <StatusItem $w={18}>
        <Line w={12} h={9}>
          <path d="M.5 4.500c3-5 8-5 11 0-3 5-8 5-11 0z" />
          <circle cx="6" cy="4.500" r="1.600" />
        </Line>
      </StatusItem>
      <Chevron w={5} sw={1.2} />
      <Spacer $w={12} />
      <Divider $h={10} />
      <Spacer $w={13} />
      <StatusItem $w={20}>90%</StatusItem>
      <Spacer $w={11} />
      <Chevron w={5} sw={1.2} />
      <Spacer $w={14} />
      <Line w={9} h={2} color="#333" sw={1.3}>
        <path d="M0 1h9" />
      </Line>
      <Spacer $w={12} />
      <Slider>
        <Knob />
      </Slider>
      <Spacer $w={12} />
      <Line w={8} color="#333" sw={1.4}>
        <path d="M4 .7v6.600M.7 4h6.600" />
      </Line>
      <Spacer $w={16} />
      <Line w={11}>
        <path d="M.6 3.500V.6h3M7.500.6h3v3M10.500 7.500v3h-3M3.600 10.500h-3v-3M2.500 5l2-2M8.500 6l-2 2" />
      </Line>
      <Spacer $w={4} />
    </StatusBar>
  );
}

function WindowsTaskbar() {
  return (
    <Taskbar>
      <TaskSlot $w={50}>
        <svg width="20" height="20" viewBox="0 0 20 20">
          <path d="M16 6c2.500 6-2 12-8 12-3 0-5.500-1.500-6.500-3.500C8 15.500 13 12 12 6z" fill="#f0a02a" />
          <path d="M3 9.500A2.700 2.700 0 0 1 4 4.300 4 4 0 0 1 11.500 5 2.300 2.300 0 0 1 11 9.500z" fill="#a9c3ec" />
        </svg>
        <Badge $x={25} $y={3.500} $color="#b3202a">
          4
        </Badge>
      </TaskSlot>
      <Spacer $w={65} />
      <TaskSlot>
        <svg width="18" height="18" viewBox="0 0 18 18">
          <defs>
            <linearGradient id="win" x1="0" y1="0" x2="1" y2="1">
              <stop offset="0" stopColor="#43c0f3" />
              <stop offset="1" stopColor="#0a74cf" />
            </linearGradient>
          </defs>
          <path d="M0 0h8.600v8.600H0zM9.400 0H18v8.600H9.400zM0 9.400h8.600V18H0zM9.400 9.400H18V18H9.400z" fill="url(#win)" />
        </svg>
      </TaskSlot>
      <TaskSlot>
        <Line w={18} color="#333" sw={1.6}>
          <circle cx="8" cy="8" r="6.500" />
          <path d="M12.700 12.700l4 4" />
        </Line>
      </TaskSlot>
      <TaskSlot>
        <svg width="18" height="18">
          <path d="M6 0h12v12H6z" fill="#f6f6f6" />
          <path d="M0 5h14v13H0z" fill="#242424" />
          <path d="M5 4h9v9H5z" fill="#b9b9b9" />
        </svg>
      </TaskSlot>
      <TaskSlot>
        <svg width="19" height="19" viewBox="0 0 20 20">
          <defs>
            <linearGradient id="copilotA" x1="0" y1="0" x2="0" y2="1">
              <stop offset="0" stopColor="#2b9be8" />
              <stop offset=".6" stopColor="#4cb87a" />
              <stop offset="1" stopColor="#f0c030" />
            </linearGradient>
            <linearGradient id="copilotB" x1="0" y1="0" x2="0" y2="1">
              <stop offset="0" stopColor="#a35be0" />
              <stop offset=".6" stopColor="#ea5a9a" />
              <stop offset="1" stopColor="#f58a4a" />
            </linearGradient>
          </defs>
          <path d="M6 1h6.500c-2 .5-2.300 2-2.800 3.500L7.500 12c-.5 1.800-1.300 3-3 3H3c-3 0-3.300-2.500-2.500-5L2.500 4C3 2.200 4 1 6 1z" fill="url(#copilotA)" />
          <path d="M11 1h2.500c1.500 0 2 1 2.500 2.500L16.700 6h-4.500c-1.200 0-1.800.5-2.200 1.500z" fill="#2848c8" />
          <path d="M14 19H7.500c2-.5 2.300-2 2.800-3.500L12.500 8c.5-1.800 1.300-3 3-3H17c3 0 3.300 2.500 2.500 5l-2 6c-.5 1.800-1.500 3-3.500 3z" fill="url(#copilotB)" />
        </svg>
      </TaskSlot>
      <TaskSlot>
        <svg width="19" height="19" viewBox="0 0 19 19">
          <defs>
            <linearGradient id="edge" x1="0" y1="0" x2="1" y2="0">
              <stop offset="0" stopColor="#2aa9dd" />
              <stop offset="1" stopColor="#5fd06e" />
            </linearGradient>
          </defs>
          <circle cx="9.500" cy="9.500" r="9.300" fill="#1273c4" />
          <path d="M.4 8C2-1 16-2 18.500 7c1 5-4 6.500-7 5 3-5-5-8-11.100-4z" fill="url(#edge)" />
          <path d="M11 12c-2-1-1-3-1-4 3 0 2 4 8 4-1 1-4 2-7 0z" fill="#e9f5f8" />
        </svg>
      </TaskSlot>
      <TaskSlot>
        <svg width="19" height="18" viewBox="0 0 19 18">
          <path d="M0 2a1 1 0 0 1 1-1h6l2 2h9a1 1 0 0 1 1 1v14H0z" fill="#e2a51e" />
          <path d="M0 5h19v13H0z" fill="#fbd14b" />
          <path d="M3.500 18v-4a2 2 0 0 1 2-2h8a2 2 0 0 1 2 2v4z" fill="#1b79c6" />
        </svg>
      </TaskSlot>
      <TaskSlot>
        <svg width="19" height="19" viewBox="0 0 19 19">
          <path d="M6 4V1h7v3" fill="none" stroke="#4bb8ec" strokeWidth="1.500" />
          <path d="M1 3.500h17V17a2 2 0 0 1-2 2H3a2 2 0 0 1-2-2z" fill="#17508b" />
          <path d="M5.500 7h3.600v3.600H5.500z" fill="#ef5a33" />
          <path d="M9.900 7h3.600v3.600H9.900z" fill="#8cc63f" />
          <path d="M5.500 11.400h3.600V15H5.500z" fill="#33b3ea" />
          <path d="M9.900 11.400h3.600V15H9.900z" fill="#fcc42d" />
        </svg>
      </TaskSlot>
      <TaskSlot>
        <svg width="20" height="18" viewBox="0 0 20 18">
          <path d="M5 6l8-6 7 5v11a2 2 0 0 1-2 2H5z" fill="#2d9be0" />
          <path d="M7 11l13-6v6L8 17z" fill="#145ea9" />
          <path d="M0 5h10v9H0z" fill="#1267b4" />
          <circle cx="5" cy="9.500" r="2.300" fill="none" stroke="#fff" strokeWidth="1.400" />
        </svg>
      </TaskSlot>
      <TaskSlot>
        <svg width="19" height="19" viewBox="0 0 19 19">
          <circle cx="9.500" cy="9.500" r="9.500" fill="#1169ec" />
          <path d="M8 19v-6.500H5.700V9.800H8V7.700C8 5.300 9.400 4 11.600 4l1.800.1v2.300h-1.200c-1.200 0-1.500.6-1.500 1.400v2h2.600l-.4 2.700h-2.200V19z" fill="#fff" />
        </svg>
      </TaskSlot>
      <TaskSlot>
        <svg width="12" height="18" viewBox="0 0 12 18">
          <path d="M0 0h4v18H0zM8 0h4v18H8z" fill="#b00b17" />
          <path d="M0 0h4l8 18H8z" fill="#e31422" />
        </svg>
      </TaskSlot>
      <TaskSlot>
        <svg width="19" height="19" viewBox="0 0 19 19" fill="none" strokeWidth="1.800">
          <circle cx="9.500" cy="9.500" r="9.500" fill="#0c0c0c" />
          <path d="M9.800 4v8a2.300 2.300 0 1 1-2.300-2.300M9.800 4.500c.4 2 2 3.200 3.700 3.200" stroke="#25e5e0" />
          <path d="M10.800 5v8a2.300 2.300 0 1 1-2.300-2.300M10.800 5.500c.4 2 2 3.200 3.700 3.200" stroke="#f0365f" />
          <path d="M10.300 4.500v8A2.300 2.300 0 1 1 8 10.200M10.300 5c.4 2 2 3.200 3.700 3.200" stroke="#fff" />
        </svg>
      </TaskSlot>
      <TaskSlot>
        <svg width="19" height="18" viewBox="0 0 19 18">
          <circle cx="15.500" cy="3.500" r="2.300" fill="#5b62c4" />
          <circle cx="10.500" cy="3" r="3" fill="#7880dc" />
          <path d="M12 7h7v5a4 4 0 0 1-7 2z" fill="#5b62c4" />
          <path d="M6 7h9v5.500a5 5 0 0 1-9 3z" fill="#7880dc" />
          <path d="M0 4.500h9.500V14H0z" fill="#4850b5" />
          <path d="M2.500 7h4.600M4.800 7v5" stroke="#fff" strokeWidth="1.300" />
        </svg>
      </TaskSlot>
      <TaskSlot>
        <svg width="19" height="19" viewBox="0 0 19 19">
          <path d="M9.500 0C4 0 0 4 0 9.200c0 2.800 1.200 5.200 3 6.800V19l3-1.400c1 .3 2.200.5 3.500.5 5.500 0 9.500-4 9.500-9S15 0 9.500 0z" fill="#176cf5" />
          <path d="M4 11.500 7.500 7l3 2.700L15 7l-3.700 4.700L8.300 9z" fill="#fff" stroke="#fff" strokeWidth=".7" />
        </svg>
      </TaskSlot>
      <TaskSlot>
        <svg width="19" height="19" viewBox="0 0 19 19">
          <defs>
            <linearGradient id="insta" x1="0" y1="1" x2="1" y2="0">
              <stop offset="0" stopColor="#fcb33c" />
              <stop offset=".45" stopColor="#e8334f" />
              <stop offset="1" stopColor="#8b35c9" />
            </linearGradient>
          </defs>
          <rect width="19" height="19" rx="4.500" fill="url(#insta)" />
          <g fill="none" stroke="#fff" strokeWidth="1.400">
            <rect x="3.500" y="3.500" width="12" height="12" rx="3.500" />
            <circle cx="9.500" cy="9.500" r="2.900" />
          </g>
          <circle cx="13" cy="6" r=".8" fill="#fff" />
        </svg>
      </TaskSlot>
      <TaskSlot>
        <svg width="19" height="19" viewBox="0 0 19 19">
          <circle cx="9.500" cy="9.500" r="9" fill="#f8fbf9" />
          <path d="M4.200 15l.8-2.700a5.200 5.200 0 1 1 2 1.900z" fill="none" stroke="#2dc85e" strokeWidth="1.300" />
          <path d="M7.300 7c0 2.700 2 4.700 4.500 4.700l.5-1.200-1.500-.8-.7.600c-.8-.4-1.300-1-1.600-1.600l.5-.7-.6-1.400z" fill="#2dc85e" />
        </svg>
        <Badge $x={18} $y={4} $color="#1477c2">
          3
        </Badge>
      </TaskSlot>
      <TaskSlot>
        <svg width="19" height="19" viewBox="0 0 19 19">
          <path d="M2 0h15l1 2-4 5H5L1 2z" fill="#2458b8" />
          <path d="M3 1.500h14" stroke="#5c8de6" strokeWidth="2" />
          <circle cx="9.500" cy="13" r="6" fill="#e8672a" />
          <circle cx="9.500" cy="13" r="3.500" fill="#f49a48" />
        </svg>
      </TaskSlot>
      <TaskSlot $w={36.800} $on $line>
        <svg width="19" height="19" viewBox="0 0 19 19">
          <circle cx="9.500" cy="9.500" r="9.500" fill="#ee2a1f" />
          <path
            d="M3.800 6.500l2.500 6.500 3-5 3 5 3-6.500H9.700M3.800 6.500h3l1.700 3.500"
            fill="none"
            stroke="#fff"
            strokeWidth="1.300"
            strokeLinejoin="round"
          />
        </svg>
      </TaskSlot>
      <TaskSlot $w={36}>
        <svg width="18" height="18" viewBox="0 0 18 18" fill="none">
          <path d="M9 1H1v8h3M9 1v4" stroke="#d03838" strokeWidth="1.600" strokeDasharray="2 1" />
          <path d="M8 4v9M6 10h9" stroke="#8d8d8d" strokeWidth="1.500" />
          <circle cx="15.500" cy="9.500" r="2" stroke="#2f9bdc" strokeWidth="1.400" />
          <circle cx="8" cy="16" r="2" stroke="#2f9bdc" strokeWidth="1.400" />
        </svg>
      </TaskSlot>
      <TaskSlot $w={36} $line>
        <Dots r={1.500} gap={4.700} color="#222" />
      </TaskSlot>
      <Spacer $w={56} />
      <Chevron w={9} sw={1.2} up />
      <Spacer $w={14} />
      <svg width="14" height="12" viewBox="0 0 14 12">
        <path d="M3.500 10A3 3 0 0 1 3 4.200 4 4 0 0 1 10.500 3 3.300 3.300 0 0 1 11 10z" fill="#a0a0a0" stroke="#4c4c4c" />
        <circle cx="9.800" cy="8" r="3.900" fill="#cf2442" />
        <path d="M8.500 6.700l2.600 2.600M11.100 6.700 8.500 9.300" stroke="#fff" />
      </svg>
      <Spacer $w={12} />
      <Line w={12} h={10} color="#333">
        <path d="M.7 3.500c3-3 7.600-3 10.600 0M2.300 5.500c2-2 5.400-2 7.400 0M4 7.400c1.200-1.100 2.800-1.100 4 0" />
        <circle cx="6" cy="9" r=".5" />
      </Line>
      <Spacer $w={6} />
      <Line w={12} h={10} color="#333">
        <path d="M.6 3.500h2L5.500 1v8L2.600 6.500h-2zM7.300 3.500q1.200 1.500 0 3M9 2q2.500 3 0 6" />
      </Line>
      <Spacer $w={7} />
      <Line w={13} h={10} color="#222">
        <path d="M2 3h9v5.500H2zM11.500 5v1.500M1.500 0v3M3.500 0v3" />
        <path d="M4 4.500h6v3H4z" fill="#222" />
      </Line>
      <Clock>
        <div>8:07 PM</div>
        <div>5/14/2025</div>
      </Clock>
    </Taskbar>
  );
}

export default function App() {
  return (
    <Screen>
      <GlobalStyle />
      <Desktop>
        <LeftEdge>
          <LeftPage />
        </LeftEdge>
        <Window>
          <TopBar />
          <Menu />
          <RibbonBar />
          <Body>
            <Main>
              <FormulaBar>
                <NameBox>
                  A1
                  <Chevron w={7} sw={0.9} color="#888" />
                </NameBox>
                <FormulaInput>
                  <Line w={12}>
                    <circle cx="5.500" cy="5.500" r="4.700" />
                    <path d="M9 9l2.500 2.500M3.500 4.500h4M3.500 6.500h4" />
                  </Line>
                  <Fx>fx</Fx>
                  <Divider $h={12} />
                  <FormulaText>Promotion Deployment tracker for the Month of APRIL, 2025</FormulaText>
                </FormulaInput>
              </FormulaBar>
              <SheetArea>
                <Sheet />
                <VScroll>
                  <SplitHandle />
                  <Triangle w={5} />
                  <VThumb />
                  <Triangle w={5} dir="down" />
                </VScroll>
              </SheetArea>
              <SheetFooter />
            </Main>
            <Tools />
          </Body>
          <Status />
        </Window>
        <RightEdge>
          <RightPage />
          <Triangle w={8} color="#7d7d7d" />
          <OuterThumb />
          <Triangle w={8} dir="down" color="#7d7d7d" />
        </RightEdge>
      </Desktop>
      <WindowsTaskbar />
    </Screen>
  );
}
